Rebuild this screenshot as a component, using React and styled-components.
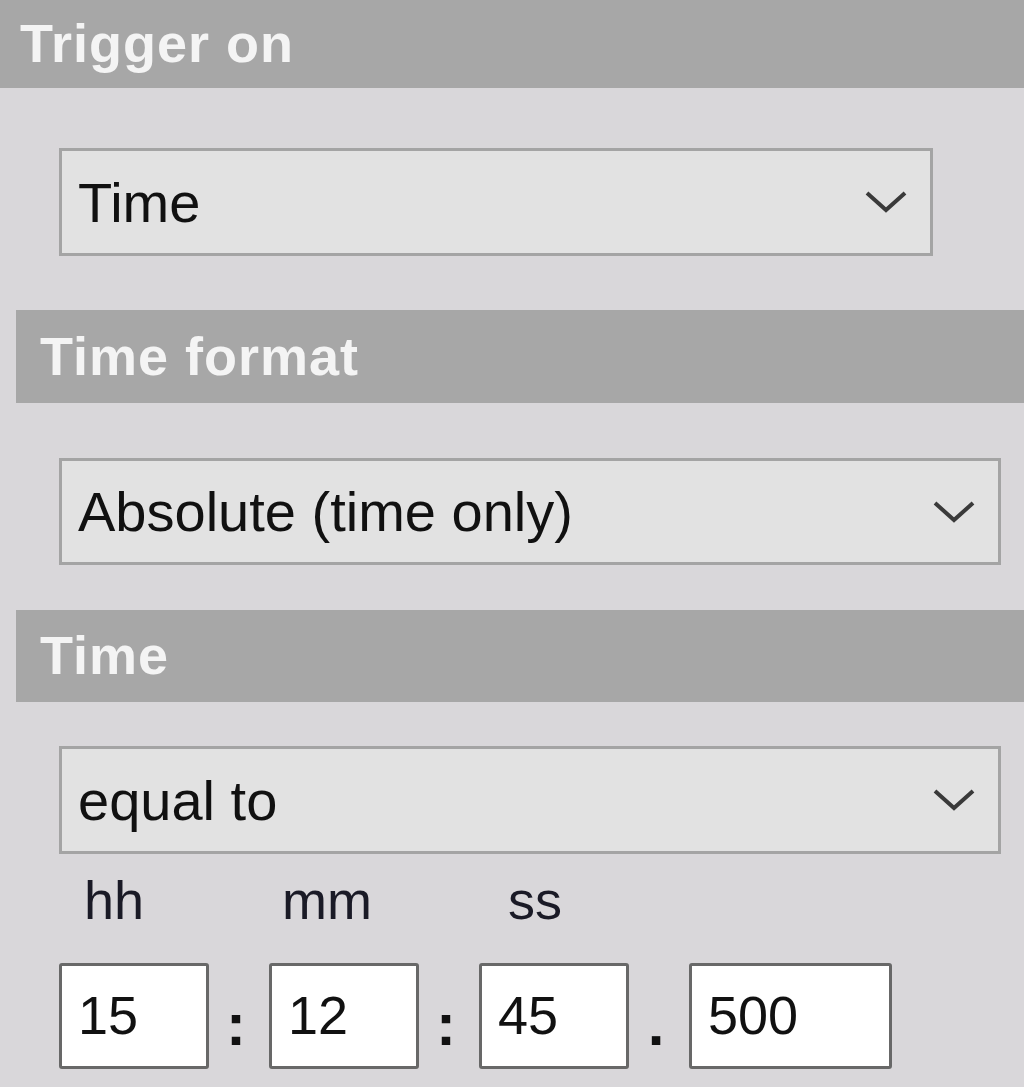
import React from 'react'
import styled, { createGlobalStyle } from 'styled-components'

const Global = createGlobalStyle`
    html, body {
        margin: 0;
        padding: 0;
        background: #d9d7da;
    }
    body {
        font-family: 'Liberation Sans', Arial, sans-serif;
    }
`

const Panel = styled.div`
    width: 1024px;
    height: 1087px;
    overflow: hidden;
    background-color: #d9d7da;
    display: flex;
    flex-direction: column;
`

const Header = styled.div`
    display: flex;
    align-items: center;
    height: ${props => props.h}px;
    margin-top: ${props => props.top || 0}px;
    margin-left: ${props => props.indent || 0}px;
    padding-left: ${props => props.indent ? 24 : 20}px;
    padding-bottom: 2px;
    box-sizing: border-box;
    background-color: #a7a7a7;
    color: #f4f4f4;
    font-size: 54px;
    font-weight: bold;
    letter-spacing: 1px;
`

const Select = styled.div`
    display: flex;
    align-items: center;
    justify-content: space-between;
    box-sizing: border-box;
    width: ${props => props.w}px;
    height: ${props => props.h || 108}px;
    margin-top: ${props => props.top}px;
    margin-left: 59px;
    padding: 0 22px 0 16px;
    background-color: #e2e2e2;
    border: 3px solid #a4a4a4;
    color: #111;
    font-size: 56px;
`

const Chevron = () => (
    <svg width='44' height='26' viewBox='0 0 44 26'>
        <polyline points='3,4 22,21 41,4' fill='none' stroke='#3a3a3a' strokeWidth='4' />
    </svg>
)

const TimeGrid = styled.div`
    display: grid;
    grid-template-columns: 150px 60px 150px 60px 150px 60px 203px;
    margin-left: 59px;
`

const LabelRow = styled(TimeGrid)`
    height: 96px;
    align-items: center;
`

const Label = styled.div`
    padding-left: ${props => props.offset}px;
    padding-bottom: 4px;
    color: #1a1a26;
    font-size: 54px;
`

const FieldRow = styled(TimeGrid)`
    margin-top: 13px;
    height: 106px;
    align-items: stretch;
`

const Field = styled.input`
    box-sizing: border-box;
    width: 100%;
    height: 106px;
    margin: 0;
    padding: 0 0 2px 16px;
    background-color: #ffffff;
    border: 3px solid #686868;
    border-radius: 3px;
    color: #111;
    font-family: 'Liberation Sans', Arial, sans-serif;
    font-size: 54px;
    outline: none;
`

const Sep = styled.div`
    display: flex;
    align-items: center;
    justify-content: center;
    padding-top: 16px;
    padding-right: 6px;
    color: #111;
    font-size: 60px;
    font-weight: 900;
`

const App = () => {
    return (
        <>
            <Global />
            <Panel>
                <Header h={88}>Trigger on</Header>
                <Select w={874} top={60}>
                    <span>Time</span>
                    <Chevron />
                </Select>

                <Header h={93} top={54} indent={16}>Time format</Header>
                <Select w={942} top={55} h={107}>
                    <span>Absolute (time only)</span>
                    <Chevron />
                </Select>

                <Header h={92} top={45} indent={16}>Time</Header>
                <Select w={942} top={44}>
                    <span>equal to</span>
                    <Chevron />
                </Select>

                <LabelRow>
                    <Label offset={25}>hh</Label>
                    <span />
                    <Label offset={13}>mm</Label>
                    <span />
                    <Label offset={29}>ss</Label>
                </LabelRow>

                <FieldRow>
                    <Field readOnly defaultValue='15' />
                    <Sep>:</Sep>
                    <Field readOnly defaultValue='12' />
                    <Sep>:</Sep>
                    <Field readOnly defaultValue='45' />
                    <Sep>.</Sep>
                    <Field readOnly defaultValue='500' />
                </FieldRow>
            </Panel>
        </>
    )
}

export default App
